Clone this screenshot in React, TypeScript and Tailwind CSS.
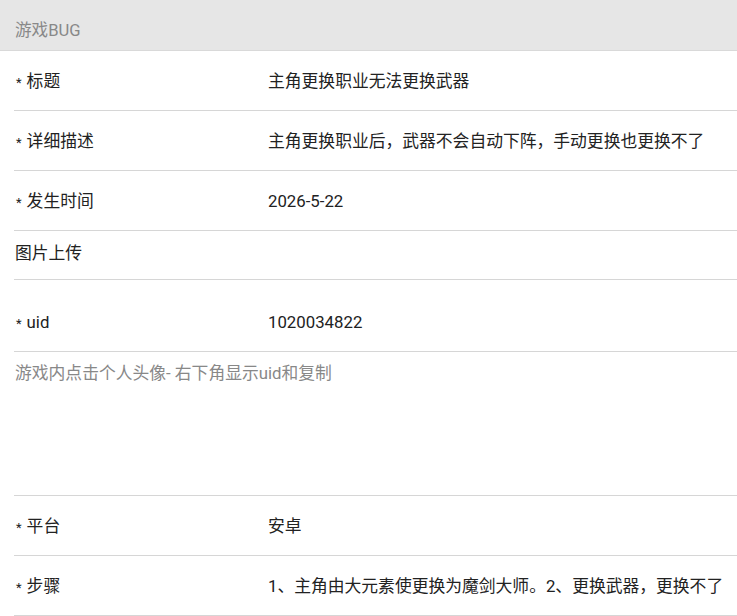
import React from "react";

const font = { fontFamily: "Roboto, 'Noto Sans CJK SC', 'Noto Sans', sans-serif" };

function Row({ label, value, required = true }: { label: string; value?: string; required?: boolean }) {
  return (
    <div className="ml-[14px] flex h-[60px] items-center border-b border-[#d6d6d6]">
      <div className="flex w-[254px] shrink-0 items-center text-[16.8px] leading-[22px] text-[#222]">
        {required && <span className="mr-[5px] ml-[2px] mt-[5px] text-[13px] text-[#222]">*</span>}
        <span>{label}</span>
      </div>
      <div className="text-[16.8px] leading-[22px] text-[#222] whitespace-nowrap">{value}</div>
    </div>
  );
}

export default function App() {
  return (
    <div className="h-[616px] w-[737px] overflow-hidden bg-white" style={font}>
      <div className="flex h-[51px] items-start border-b border-[#d9d9d9] bg-[#e6e6e6] px-[15px] pt-[20px]">
        <span className="text-[16.6px] leading-[22px] text-[#888]">游戏BUG</span>
      </div>
      <Row label="标题" value="主角更换职业无法更换武器" />
      <Row label="详细描述" value="主角更换职业后，武器不会自动下阵，手动更换也更换不了" />
      <Row label="发生时间" value="2026-5-22" />
      <div className="ml-[14px] h-[49px] border-b border-[#d6d6d6] pt-[11px]">
        <span className="ml-px block text-[16.8px] leading-[22px] text-[#222]">图片上传</span>
      </div>
      <div className="pt-[12px]">
        <Row label="uid" value="1020034822" />
      </div>
      <div className="ml-[14px] h-[144px] border-b border-[#d6d6d6] pt-[10px]">
        <span className="ml-px block text-[16.8px] leading-[22px] text-[#888]">游戏内点击个人头像- 右下角显示uid和复制</span>
      </div>
      <Row label="平台" value="安卓" />
      <Row label="步骤" value="1、主角由大元素使更换为魔剑大师。2、更换武器，更换不了" />
    </div>
  );
}
